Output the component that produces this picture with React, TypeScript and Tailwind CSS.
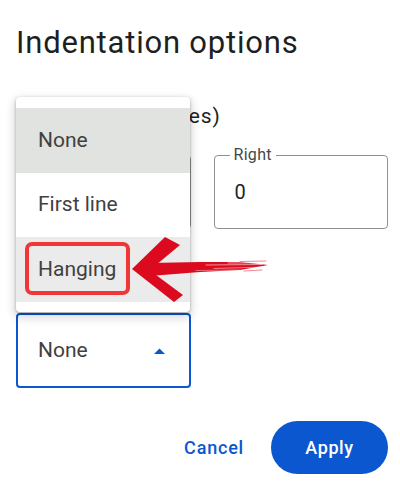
import React from "react";

const items = [
  { label: "None", height: "h-[65px]", bg: "bg-[#e1e3e1]" },
  { label: "First line", height: "h-[64px]", bg: "bg-white" },
  { label: "Hanging", height: "h-[65px]", bg: "bg-[#ebebeb]", marked: true },
];

function Arrow() {
  return (
    <svg
      className="pointer-events-none absolute left-[128px] top-[234px]"
      width="145"
      height="72"
      viewBox="128 234 145 72"
    >
      <polygon
        points="132,269 165,237 180,245 156,265 156,275 183,295 174,302"
        fill="#dc0a1e"
      />
      <polygon
        points="150,263 200,262 240,262 268,265 240,270 200,272 150,276"
        fill="#dc0a1e"
      />
      <g stroke="#fff" strokeLinecap="round">
        <line x1="206" y1="265" x2="262" y2="264.5" strokeWidth="1" opacity="0.55" />
        <line x1="214" y1="268.5" x2="266" y2="267" strokeWidth="0.8" opacity="0.6" />
        <line x1="228" y1="263" x2="258" y2="262.8" strokeWidth="0.8" opacity="0.7" />
        <line x1="196" y1="270.5" x2="240" y2="270" strokeWidth="0.8" opacity="0.5" />
      </g>
      <g stroke="#dc0a1e" strokeLinecap="round" opacity="0.6">
        <line x1="240" y1="261.5" x2="266" y2="261" strokeWidth="0.8" />
        <line x1="244" y1="271" x2="262" y2="270" strokeWidth="0.8" />
      </g>
    </svg>
  );
}

function IndentMenu() {
  return (
    <div className="absolute left-4 top-[97px] w-[174px] rounded-[4px] bg-white pb-[10px] pt-[11px] shadow-[0_1px_3px_rgba(0,0,0,0.3),0_4px_8px_3px_rgba(0,0,0,0.12)]">
      {items.map((item) => (
        <div
          key={item.label}
          className={`relative flex items-center pl-[22px] text-[21px] text-[#3f4140] ${item.height} ${item.bg}`}
        >
          {item.label}
          {item.marked ? (
            <span className="absolute left-[9px] top-[5px] h-[53px] w-[105px] rounded-[7px] border-[4px] border-[#f03636]" />
          ) : null}
        </div>
      ))}
    </div>
  );
}

export default function App() {
  return (
    <div className="relative h-[503px] w-[400px] overflow-hidden bg-white font-['Roboto',sans-serif] text-[#1f1f1f]">
      <div className="pl-4 pr-3 pt-[25px]">
        <h1 className="text-[31px] leading-[36px] tracking-[0.8px] text-[#1f1f1f]">Indentation options</h1>

        <p className="mt-[41px] text-[21px] leading-[28px] tracking-[0.9px]">Indentation (inches)</p>

        <div className="mt-[25px] grid grid-cols-2 gap-[23px]">
          <div className="h-[74px] rounded-[4px] border border-[#8e918f]" />
          <div className="relative flex h-[74px] items-center rounded-[4px] border border-[#8e918f] pl-5 text-[20px] leading-[28px]">
            <span className="absolute left-[15px] top-[-9px] bg-white px-1 text-[16px] leading-[16px] tracking-[0.3px] text-[#444746]">
              Right
            </span>
            0
          </div>
        </div>

        <div className="mt-[84px] flex h-[75px] w-[175px] items-center justify-between rounded-[4px] border-[2.5px] border-[#0b57d0] pl-5 pr-[24px] text-[21px] text-[#3f4140]">
          None
          <svg width="11" height="6" viewBox="0 0 11 6">
            <polygon points="0,6 5.5,0.5 11,6" fill="#0b57d0" />
          </svg>
        </div>

        <div className="mt-[33px] flex items-center justify-end gap-[27px]">
          <button className="text-[18px] font-medium tracking-[0.8px] text-[#0b57d0]">Cancel</button>
          <button className="flex h-[53px] w-[117px] items-center justify-center rounded-full bg-[#0b57d0] text-[18px] font-medium tracking-[0.6px] text-white">
            Apply
          </button>
        </div>
      </div>

      <IndentMenu />
      <Arrow />
    </div>
  );
}
